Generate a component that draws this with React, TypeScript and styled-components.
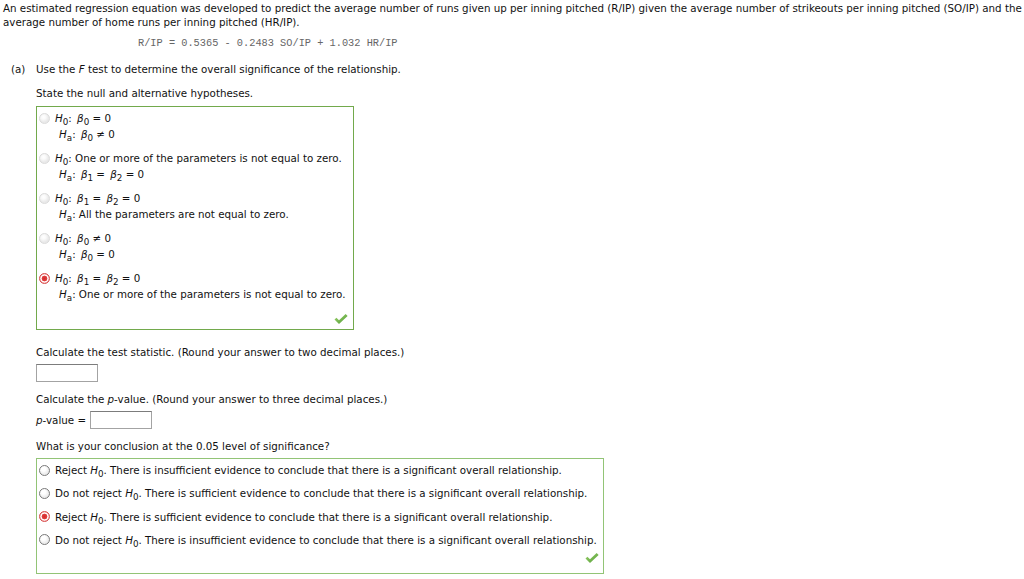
import React from "react";
import styled, { createGlobalStyle } from "styled-components";

const GlobalStyle = createGlobalStyle`
  html, body {
    margin: 0;
    padding: 0;
    background: #ffffff;
  }
  body {
    font-family: "DejaVu Sans", Verdana, sans-serif;
    font-size: 10.3px;
    line-height: 14px;
    color: #111111;
  }
`;

const Page = styled.div`
  padding: 1px 3px 0 3px;
`;

const Intro = styled.p`
  margin: 0;
  white-space: nowrap;
`;

const Equation = styled.div`
  margin: 7px 0 0 135px;
  font-family: "Liberation Mono", "Courier New", monospace;
  font-size: 10.3px;
  line-height: 14px;
  color: #666666;
`;

const PartRow = styled.div`
  display: grid;
  grid-template-columns: 25px 1fr;
  margin-top: 12px;
  padding-left: 8px;
`;

const PartLabel = styled.div``;

const PartBody = styled.div`
  display: flex;
  flex-direction: column;
  align-items: flex-start;
`;

const Line = styled.div<{ $gap?: number }>`
  margin-top: ${(p) => p.$gap ?? 0}px;
  white-space: nowrap;
`;

const AnswerBox = styled.div<{ $width: number; $border: string; $top: number; $pad: number }>`
  box-sizing: border-box;
  width: ${(p) => p.$width}px;
  margin-top: ${(p) => p.$top}px;
  padding-top: ${(p) => p.$pad}px;
  border: 1px solid ${(p) => p.$border};
`;

const OptionList = styled.div<{ $gap: number }>`
  display: flex;
  flex-direction: column;
  gap: ${(p) => p.$gap}px;
`;

const Option = styled.label`
  display: flex;
  align-items: flex-start;
  gap: 5px;
  padding-left: 2px;
  line-height: 16px;
  white-space: nowrap;
`;

const Radio = styled.span<{ $checked?: boolean; $faded?: boolean }>`
  flex: 0 0 auto;
  box-sizing: border-box;
  width: 11px;
  height: 11px;
  margin-top: 2.5px;
  border-radius: 50%;
  border: 1px solid
    ${(p) => (p.$checked ? "#d84a4a" : p.$faded ? "#dadada" : "#7a7a7a")};
  background: ${(p) =>
    p.$checked
      ? "radial-gradient(circle, #d42a2a 0, #e04141 2.6px, #ffffff 3.2px, #ffffff 3.6px, #f3b0b0 4.4px)"
      : p.$faded
      ? "radial-gradient(circle at 40% 35%, #ffffff 0, #fafafa 2px, #e9e9e9 5px)"
      : "radial-gradient(circle at 40% 35%, #ffffff 0, #ffffff 2px, #ececec 5px)"};
`;

const OptionText = styled.div`
  display: flex;
  flex-direction: column;
`;

const AltLine = styled.div`
  padding-left: 4px;
`;

const Hyp = styled.i`
  font-style: italic;
`;

const Sub = styled.sub`
  font-size: 0.85em;
  line-height: 0;
  vertical-align: -0.35em;
  font-style: normal;
`;

const Beta = styled.i`
  font-style: italic;
  margin-left: 2px;
`;

const Footer = styled.div<{ $pt: number; $pr: number; $pb: number }>`
  display: flex;
  justify-content: flex-end;
  padding: ${(p) => `${p.$pt}px ${p.$pr}px ${p.$pb}px 0`};
`;

const Field = styled.span<{ $width: number }>`
  display: block;
  box-sizing: border-box;
  width: ${(p) => p.$width}px;
  height: 18px;
  border: 1px solid #a3a3a3;
  border-top-color: #7c7c7c;
  background: #ffffff;
`;

const FieldRow = styled.div`
  display: flex;
  align-items: center;
  gap: 4px;
  margin-top: 5px;
`;

const Check = () => (
  <svg width="14" height="10" viewBox="0 0 14 10">
    <defs>
      <linearGradient id="chk" x1="0" y1="0" x2="1" y2="1">
        <stop offset="0" stopColor="#9fd46e" />
        <stop offset="1" stopColor="#4f9a34" />
      </linearGradient>
    </defs>
    <path d="M0.5 5.6 L2.4 3.7 L5 6.2 L11.6 0 L13.6 2 L5 10 Z" fill="url(#chk)" />
  </svg>
);

const H = ({ s }: { s: string }) => (
  <>
    <Hyp>H</Hyp>
    <Sub>{s}</Sub>
  </>
);

const B = ({ s }: { s: string }) => (
  <>
    <Beta>β</Beta>
    <Sub>{s}</Sub>
  </>
);

type Hypothesis = {
  null: React.ReactNode;
  alt: React.ReactNode;
  checked?: boolean;
};

const hypotheses: Hypothesis[] = [
  {
    null: (
      <>
        <H s="0" />: <B s="0" /> = 0
      </>
    ),
    alt: (
      <>
        <H s="a" />: <B s="0" /> ≠ 0
      </>
    ),
  },
  {
    null: (
      <>
        <H s="0" />: One or more of the parameters is not equal to zero.
      </>
    ),
    alt: (
      <>
        <H s="a" />: <B s="1" /> = <B s="2" /> = 0
      </>
    ),
  },
  {
    null: (
      <>
        <H s="0" />: <B s="1" /> = <B s="2" /> = 0
      </>
    ),
    alt: (
      <>
        <H s="a" />: All the parameters are not equal to zero.
      </>
    ),
  },
  {
    null: (
      <>
        <H s="0" />: <B s="0" /> ≠ 0
      </>
    ),
    alt: (
      <>
        <H s="a" />: <B s="0" /> = 0
      </>
    ),
  },
  {
    null: (
      <>
        <H s="0" />: <B s="1" /> = <B s="2" /> = 0
      </>
    ),
    alt: (
      <>
        <H s="a" />: One or more of the parameters is not equal to zero.
      </>
    ),
    checked: true,
  },
];

const conclusions = [
  { verb: "Reject", rest: "There is insufficient evidence to conclude that there is a significant overall relationship." },
  { verb: "Do not reject", rest: "There is sufficient evidence to conclude that there is a significant overall relationship." },
  { verb: "Reject", rest: "There is sufficient evidence to conclude that there is a significant overall relationship.", checked: true },
  { verb: "Do not reject", rest: "There is insufficient evidence to conclude that there is a significant overall relationship." },
];

export default function App() {
  return (
    <>
      <GlobalStyle />
      <Page>
        <Intro>
          An estimated regression equation was developed to predict the average number of runs given up per
          inning pitched (R/IP) given the average number of strikeouts per inning pitched (SO/IP) and the
          <br />
          average number of home runs per inning pitched (HR/IP).
        </Intro>
        <Equation>R/IP = 0.5365 - 0.2483 SO/IP + 1.032 HR/IP</Equation>

        <PartRow>
          <PartLabel>(a)</PartLabel>
          <PartBody>
            <Line>
              Use the <i>F</i> test to determine the overall significance of the relationship.
            </Line>
            <Line $gap={10}>State the null and alternative hypotheses.</Line>

            <AnswerBox $width={318} $border="#72a94c" $top={6} $pad={3}>
              <OptionList $gap={8}>
                {hypotheses.map((h, i) => (
                  <Option key={i}>
                    <Radio $checked={h.checked} $faded />
                    <OptionText>
                      <div>{h.null}</div>
                      <AltLine>{h.alt}</AltLine>
                    </OptionText>
                  </Option>
                ))}
              </OptionList>
              <Footer $pt={12} $pr={5} $pb={5}>
                <Check />
              </Footer>
            </AnswerBox>

            <Line $gap={15}>Calculate the test statistic. (Round your answer to two decimal places.)</Line>
            <FieldRow>
              <Field $width={62} />
            </FieldRow>

            <Line $gap={10}>
              Calculate the <i>p</i>-value. (Round your answer to three decimal places.)
            </Line>
            <FieldRow>
              <span>
                <i>p</i>-value =
              </span>
              <Field $width={62} />
            </FieldRow>

            <Line $gap={10}>What is your conclusion at the 0.05 level of significance?</Line>

            <AnswerBox $width={568} $border="#92c476" $top={5} $pad={3}>
              <OptionList $gap={7.33}>
                {conclusions.map((c, i) => (
                  <Option key={i}>
                    <Radio $checked={c.checked} />
                    <div>
                      {c.verb} <H s="0" />. {c.rest}
                    </div>
                  </Option>
                ))}
              </OptionList>
              <Footer $pt={5} $pr={4} $pb={10}>
                <Check />
              </Footer>
            </AnswerBox>
          </PartBody>
        </PartRow>
      </Page>
    </>
  );
}
